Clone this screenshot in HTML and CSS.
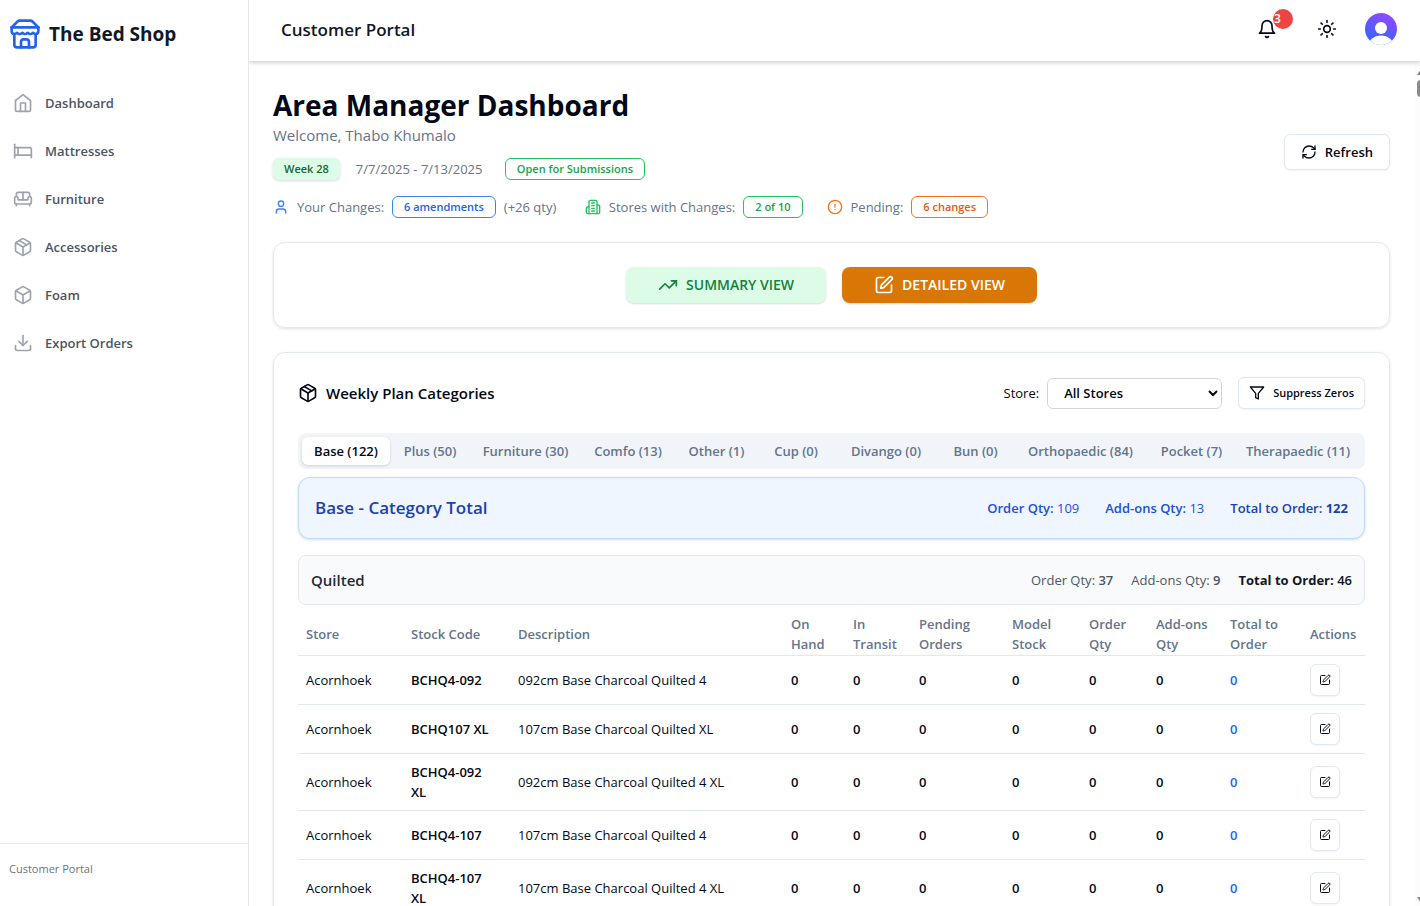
FILE: index.html
```html
<!DOCTYPE html>
<html lang="en">
<head>
<meta charset="utf-8">
<meta name="viewport" content="width=device-width, initial-scale=1">
<title>The Bed Shop - Customer Portal</title>
<link rel="stylesheet" href="styles.css">
</head>
<body>
<svg class="defs" aria-hidden="true">
  <symbol id="i-package" viewBox="0 0 24 24"><path d="m7.5 4.27 9 5.15"/><path d="M21 8a2 2 0 0 0-1-1.73l-7-4a2 2 0 0 0-2 0l-7 4A2 2 0 0 0 3 8v8a2 2 0 0 0 1 1.73l7 4a2 2 0 0 0 2 0l7-4A2 2 0 0 0 21 16Z"/><path d="m3.3 7 8.7 5 8.7-5"/><path d="M12 22V12"/></symbol>
  <symbol id="i-edit" viewBox="0 0 24 24"><path d="M12 3H5a2 2 0 0 0-2 2v14a2 2 0 0 0 2 2h14a2 2 0 0 0 2-2v-7"/><path d="M18.375 2.625a1 1 0 0 1 3 3l-9.013 9.014a2 2 0 0 1-.853.505l-2.873.84a.5.5 0 0 1-.62-.62l.84-2.873a2 2 0 0 1 .506-.852z"/></symbol>
</svg>
<div class="app">
  <aside class="sidebar">
    <div class="brand">
      <svg class="icon brand-icon" viewBox="0 0 24 24" aria-hidden="true"><path d="m2 7 4.410-4.410A2 2 0 0 1 7.830 2h8.340a2 2 0 0 1 1.420.590L22 7"/><path d="M4 12v8a2 2 0 0 0 2 2h12a2 2 0 0 0 2-2v-8"/><path d="M15 22v-4a2 2 0 0 0-2-2h-2a2 2 0 0 0-2 2v4"/><path d="M2 7h20"/><path d="M22 7v3a2 2 0 0 1-2 2 2.700 2.700 0 0 1-1.590-.630.700.700 0 0 0-.820 0A2.700 2.700 0 0 1 16 12a2.700 2.700 0 0 1-1.590-.630.700.700 0 0 0-.820 0A2.700 2.700 0 0 1 12 12a2.700 2.700 0 0 1-1.590-.630.700.700 0 0 0-.820 0A2.700 2.700 0 0 1 8 12a2.700 2.700 0 0 1-1.590-.630.700.700 0 0 0-.820 0A2.700 2.700 0 0 1 4 12a2 2 0 0 1-2-2V7"/></svg>
      <span>The Bed Shop</span>
    </div>
    <nav class="nav">
      <a href="#"><svg class="icon" viewBox="0 0 24 24" aria-hidden="true"><path d="m3 9 9-7 9 7v11a2 2 0 0 1-2 2H5a2 2 0 0 1-2-2z"/><path d="M9 22V12h6v10"/></svg>Dashboard</a>
      <a href="#"><svg class="icon" viewBox="0 0 24 24" aria-hidden="true"><path d="M2 4v16"/><path d="M2 8h18a2 2 0 0 1 2 2v10"/><path d="M2 17h20"/><path d="M6 8v9"/></svg>Mattresses</a>
      <a href="#"><svg class="icon" viewBox="0 0 24 24" aria-hidden="true"><path d="M20 9V6a2 2 0 0 0-2-2H6a2 2 0 0 0-2 2v3"/><path d="M2 16a2 2 0 0 0 2 2h16a2 2 0 0 0 2-2v-5a2 2 0 0 0-4 0v1.500a.5.5 0 0 1-.5.5h-11a.5.5 0 0 1-.5-.5V11a2 2 0 0 0-4 0z"/><path d="M4 18v2"/><path d="M20 18v2"/><path d="M12 4v9"/></svg>Furniture</a>
      <a href="#"><svg class="icon" aria-hidden="true"><use href="#i-package"/></svg>Accessories</a>
      <a href="#"><svg class="icon" viewBox="0 0 24 24" aria-hidden="true"><path d="M21 8a2 2 0 0 0-1-1.730l-7-4a2 2 0 0 0-2 0l-7 4A2 2 0 0 0 3 8v8a2 2 0 0 0 1 1.730l7 4a2 2 0 0 0 2 0l7-4A2 2 0 0 0 21 16Z"/><path d="m3.300 7 8.700 5 8.700-5"/><path d="M12 22V12"/></svg>Foam</a>
      <a href="#"><svg class="icon" viewBox="0 0 24 24" aria-hidden="true"><path d="M3 15v4a2 2 0 0 0 2 2h14a2 2 0 0 0 2-2v-4"/><path d="m7 10 5 5 5-5"/><path d="M12 15V3"/></svg>Export Orders</a>
    </nav>
    <div class="sidebar-foot">Customer Portal</div>
  </aside>

  <div class="page">
    <header class="topbar">
      <div class="topbar-title">Customer Portal</div>
      <div class="topbar-tools">
        <button class="bare bell" aria-label="Notifications">
          <svg class="icon" viewBox="0 0 24 24" aria-hidden="true"><path d="M18 8A6 6 0 0 0 6 8c0 7-3 9-3 9h18s-3-2-3-9"/><path d="M10.300 21a1.940 1.940 0 0 0 3.400 0"/></svg>
          <span class="bell-count">3</span>
        </button>
        <button class="bare" aria-label="Toggle theme">
          <svg class="icon" viewBox="0 0 24 24" aria-hidden="true"><circle cx="12" cy="12" r="4"/><path d="M12 2v2M12 20v2M4.930 4.930l1.410 1.410M17.660 17.660l1.410 1.410M2 12h2M20 12h2M6.340 17.660l-1.410 1.410M19.070 4.930l-1.410 1.410"/></svg>
        </button>
        <button class="bare avatar" aria-label="Account">
          <svg viewBox="0 0 32 32" aria-hidden="true"><defs><linearGradient id="av" x1="0.300" y1="1" x2="0.700" y2="0"><stop offset="0.250" stop-color="#4361ff"/><stop offset="1" stop-color="#9747ff"/></linearGradient><clipPath id="avc"><circle cx="16" cy="16" r="16"/></clipPath></defs><g clip-path="url(#avc)"><rect width="32" height="32" fill="url(#av)"/><circle cx="16" cy="15" r="6" fill="#fff"/><ellipse cx="16" cy="34" rx="13" ry="11.500" fill="#fff"/></g></svg>
        </button>
      </div>
    </header>

    <main class="content">
      <section class="intro">
        <div>
          <h1>Area Manager Dashboard</h1>
          <p class="welcome">Welcome, Thabo Khumalo</p>
          <div class="week">
            <span class="badge badge-week">Week 28</span>
            <span class="dates">7/7/2025 - 7/13/2025</span>
            <span class="badge badge-green">Open for Submissions</span>
          </div>
          <div class="stats">
            <div class="stat">
              <svg class="icon blue" viewBox="0 0 24 24" aria-hidden="true"><path d="M19 21v-2a4 4 0 0 0-4-4H9a4 4 0 0 0-4 4v2"/><circle cx="12" cy="7" r="4"/></svg>
              <span>Your Changes:</span><span class="badge badge-blue">6 amendments</span><span class="qty">(+26 qty)</span>
            </div>
            <div class="stat">
              <svg class="icon green" viewBox="0 0 24 24" aria-hidden="true"><path d="M6 22V4a2 2 0 0 1 2-2h8a2 2 0 0 1 2 2v18Z"/><path d="M6 12H4a2 2 0 0 0-2 2v6a2 2 0 0 0 2 2h2"/><path d="M18 9h2a2 2 0 0 1 2 2v9a2 2 0 0 1-2 2h-2"/><path d="M10 6h4M10 10h4M10 14h4M10 18h4"/></svg>
              <span>Stores with Changes:</span><span class="badge badge-green">2 of 10</span>
            </div>
            <div class="stat">
              <svg class="icon orange" viewBox="0 0 24 24" aria-hidden="true"><circle cx="12" cy="12" r="10"/><path d="M12 8v4M12 16h.01"/></svg>
              <span>Pending:</span><span class="badge badge-orange">6 changes</span>
            </div>
          </div>
        </div>
        <button class="btn refresh"><svg class="icon" viewBox="0 0 24 24" aria-hidden="true"><path d="M3 12a9 9 0 0 1 9-9 9.750 9.750 0 0 1 6.740 2.740L21 8"/><path d="M21 3v5h-5"/><path d="M21 12a9 9 0 0 1-9 9 9.750 9.750 0 0 1-6.740-2.740L3 16"/><path d="M8 16H3v5"/></svg>Refresh</button>
      </section>

      <section class="card views">
        <button class="view view-summary"><svg class="icon" viewBox="0 0 24 24" aria-hidden="true"><path d="m22 7-8.500 8.500-5-5L2 17"/><path d="M16 7h6v6"/></svg>SUMMARY VIEW</button>
        <button class="view view-detail"><svg class="icon" aria-hidden="true"><use href="#i-edit"/></svg>DETAILED VIEW</button>
      </section>

      <section class="card plan">
        <div class="plan-head">
          <h2><svg class="icon" aria-hidden="true"><use href="#i-package"/></svg>Weekly Plan Categories</h2>
          <div class="filters">
            <label for="store">Store:</label>
            <select id="store"><option>All Stores</option></select>
            <button class="btn suppress"><svg class="icon" viewBox="0 0 24 24" aria-hidden="true"><path d="M22 3H2l8 9.460V19l4 2v-8.540L22 3z"/></svg>Suppress Zeros</button>
          </div>
        </div>

        <div class="tabs" role="tablist">
          <button role="tab" aria-selected="true">Base (122)</button>
          <button role="tab">Plus (50)</button>
          <button role="tab">Furniture (30)</button>
          <button role="tab">Comfo (13)</button>
          <button role="tab">Other (1)</button>
          <button role="tab">Cup (0)</button>
          <button role="tab">Divango (0)</button>
          <button role="tab">Bun (0)</button>
          <button role="tab">Orthopaedic (84)</button>
          <button role="tab">Pocket (7)</button>
          <button role="tab">Therapaedic (11)</button>
        </div>

        <div class="total">
          <h3>Base - Category Total</h3>
          <div class="total-sums"><span><b>Order Qty:</b> 109</span><span><b>Add-ons Qty:</b> 13</span><span class="strong"><b>Total to Order:</b> <strong>122</strong></span></div>
        </div>

        <div class="group">
          <h4>Quilted</h4>
          <div class="group-sums"><span>Order Qty: <b>37</b></span><span>Add-ons Qty: <b>9</b></span><span class="strong"><strong>Total to Order:</strong> <b>46</b></span></div>
        </div>

        <table>
          <colgroup><col class="c-store"><col class="c-code"><col><col class="c-hand"><col class="c-transit"><col class="c-pending"><col class="c-model"><col class="c-order"><col class="c-addons"><col class="c-total"><col class="c-actions"></colgroup>
          <thead><tr><th>Store</th><th>Stock Code</th><th>Description</th><th>On<br>Hand</th><th>In<br>Transit</th><th>Pending<br>Orders</th><th>Model<br>Stock</th><th>Order<br>Qty</th><th>Add-ons<br>Qty</th><th>Total to<br>Order</th><th>Actions</th></tr></thead>
          <tbody>
            <tr><td>Acornhoek</td><td class="b code">BCHQ4-092</td><td>092cm Base Charcoal Quilted 4</td><td class="b">0</td><td class="b">0</td><td class="b">0</td><td class="b">0</td><td class="b">0</td><td class="b">0</td><td class="b sum">0</td><td><button class="btn row-edit" aria-label="Edit"><svg class="icon" aria-hidden="true"><use href="#i-edit"/></svg></button></td></tr>
            <tr><td>Acornhoek</td><td class="b code">BCHQ107 XL</td><td>107cm Base Charcoal Quilted XL</td><td class="b">0</td><td class="b">0</td><td class="b">0</td><td class="b">0</td><td class="b">0</td><td class="b">0</td><td class="b sum">0</td><td><button class="btn row-edit" aria-label="Edit"><svg class="icon" aria-hidden="true"><use href="#i-edit"/></svg></button></td></tr>
            <tr><td>Acornhoek</td><td class="b code">BCHQ4-092 XL</td><td>092cm Base Charcoal Quilted 4 XL</td><td class="b">0</td><td class="b">0</td><td class="b">0</td><td class="b">0</td><td class="b">0</td><td class="b">0</td><td class="b sum">0</td><td><button class="btn row-edit" aria-label="Edit"><svg class="icon" aria-hidden="true"><use href="#i-edit"/></svg></button></td></tr>
            <tr><td>Acornhoek</td><td class="b code">BCHQ4-107</td><td>107cm Base Charcoal Quilted 4</td><td class="b">0</td><td class="b">0</td><td class="b">0</td><td class="b">0</td><td class="b">0</td><td class="b">0</td><td class="b sum">0</td><td><button class="btn row-edit" aria-label="Edit"><svg class="icon" aria-hidden="true"><use href="#i-edit"/></svg></button></td></tr>
            <tr><td>Acornhoek</td><td class="b code">BCHQ4-107 XL</td><td>107cm Base Charcoal Quilted 4 XL</td><td class="b">0</td><td class="b">0</td><td class="b">0</td><td class="b">0</td><td class="b">0</td><td class="b">0</td><td class="b sum">0</td><td><button class="btn row-edit" aria-label="Edit"><svg class="icon" aria-hidden="true"><use href="#i-edit"/></svg></button></td></tr>
          </tbody>
        </table>
      </section>
    </main>
    <div class="scroll" aria-hidden="true"><i class="scroll-up"></i><i class="scroll-thumb"></i><i class="scroll-down"></i></div>
  </div>
</div>
</body>
</html>
```
FILE: styles.css
```css
* { box-sizing: border-box; }
body {
  margin: 0;
  font-family: "Open Sans", "Noto Sans", sans-serif;
  font-size: 13px;
  line-height: 20px;
  color: #020817;
  background: #fff;
}
h1, h2, h3, h4, p { margin: 0; }
button, select { font: inherit; color: inherit; }
button { cursor: pointer; }
b { font-weight: 600; }
strong { font-weight: 700; }
.defs { position: absolute; width: 0; height: 0; }
.icon {
  flex: none;
  width: 16px;
  height: 16px;
  fill: none;
  stroke: currentColor;
  stroke-width: 2;
  stroke-linecap: round;
  stroke-linejoin: round;
}

.app { display: flex; height: 100vh; overflow: hidden; }

.sidebar {
  position: relative;
  z-index: 2;
  display: flex;
  flex-direction: column;
  flex: none;
  width: 249px;
  border-right: 1px solid #e5e7eb;
  background: #fff;
}
.brand {
  display: flex;
  align-items: center;
  gap: 8px;
  height: 67px;
  padding: 0 9px;
  font-size: 19px;
  font-weight: 700;
  color: #111827;
}
.brand-icon { width: 32px; height: 32px; color: #2563eb; }
.nav { display: flex; flex-direction: column; gap: 8px; flex: 1; padding-top: 16px; }
.nav a {
  display: flex;
  align-items: center;
  gap: 12px;
  height: 40px;
  padding: 0 13px;
  font-weight: 600;
  color: #4b5563;
  text-decoration: none;
}
.nav .icon { width: 20px; height: 20px; color: #9ca3af; }
.sidebar-foot {
  height: 63px;
  padding: 15px 9px;
  border-top: 1px solid #e5e7eb;
  font-size: 11px;
  color: #6b7280;
}

.page { position: relative; display: flex; flex-direction: column; flex: 1; min-width: 0; }
.topbar {
  position: relative;
  z-index: 1;
  display: flex;
  align-items: center;
  justify-content: space-between;
  flex: none;
  height: 61px;
  padding: 0 23px 4px 32px;
  background: #fff;
  box-shadow: 0 1px 5px rgba(0, 0, 0, 0.25);
}
.topbar-title { padding-top: 2px; font-size: 17px; line-height: 24px; font-weight: 600; color: #111827; }
.topbar-tools { display: flex; align-items: center; gap: 40px; }
.bare { display: flex; padding: 0; border: 0; background: none; }
.bare .icon { width: 20px; height: 20px; }
.bell { position: relative; }
.bell-count {
  position: absolute;
  top: -10px;
  left: 16px;
  width: 20px;
  height: 20px;
  padding-left: 1px;
  border-radius: 10px;
  background: #ef4444;
  color: #fff;
  font-size: 12px;
  font-weight: 600;
  text-align: left;
}
.avatar { margin-left: -12px; }
.avatar svg { width: 32px; height: 32px; }

.content { flex: 1; min-height: 0; overflow: hidden; padding: 24px 30px 0 24px; }
.intro { display: flex; align-items: center; justify-content: space-between; }
h1 { font-size: 28px; line-height: 40px; font-weight: 700; }
.welcome { font-size: 15px; line-height: 20px; color: #64748b; }
.week { display: flex; align-items: center; gap: 16px; margin-top: 13px; color: #64748b; }
.dates { min-width: 133px; }
.stats { display: flex; align-items: center; gap: 24px; margin-top: 16px; color: #64748b; }
.stat { display: flex; align-items: center; gap: 8px; }
.qty { min-width: 57px; }
.badge {
  padding: 0 11px;
  border: 1px solid;
  border-radius: 6px;
  font-size: 11px;
  font-weight: 600;
}
.badge-week { padding: 0 10px; border-color: #dcfce7; background: #dcfce7; color: #166534; box-shadow: 0 1px 3px rgba(0, 0, 0, 0.15); }
.badge-green { border-color: #22c55e; color: #16a34a; }
.badge-blue { border-color: #3b82f6; color: #2563eb; }
.badge-orange { border-color: #f97316; color: #ea580c; }
.blue { color: #3b82f6; }
.green { color: #22c55e; }
.orange { color: #f97316; }

.btn {
  display: inline-flex;
  align-items: center;
  justify-content: center;
  border: 1px solid #e2e8f0;
  border-radius: 6px;
  background: #fff;
  font-weight: 600;
  box-shadow: 0 1px 2px rgba(0, 0, 0, 0.05);
}
.refresh { gap: 8px; height: 36px; padding: 0 16px; }

.card {
  margin-top: 24px;
  border: 1px solid #e2e8f0;
  border-radius: 12px;
  box-shadow: 0 1px 3px rgba(0, 0, 0, 0.12);
}
.views { display: flex; justify-content: center; gap: 16px; padding: 24px; }
.view {
  display: flex;
  align-items: center;
  gap: 8px;
  height: 36px;
  padding: 0 32px;
  border: 0;
  border-radius: 8px;
  font-size: 14px;
  font-weight: 600;
  box-shadow: 0 1px 2px rgba(0, 0, 0, 0.15);
}
.view .icon { width: 20px; height: 20px; }
.view-summary { background: #dcfce7; color: #15803d; }
.view-detail { background: #d97706; color: #fff; }

.plan { padding: 24px; }
.plan-head { display: flex; align-items: center; justify-content: space-between; }
h2 { display: flex; align-items: center; gap: 8px; font-size: 15px; font-weight: 600; }
h2 .icon { width: 20px; height: 20px; }
.filters { display: flex; align-items: center; }
select {
  width: 175px;
  height: 31px;
  margin: 0 16px 0 8px;
  padding: 0 12px;
  border: 1px solid #d1d5db;
  border-radius: 6px;
  background: #fff;
  font-weight: 600;
}
.suppress { gap: 8px; height: 32px; padding: 0 10px; font-size: 11px; }

.tabs {
  display: grid;
  grid-template-columns: 88fr 80fr 111fr 94fr 83fr 76fr 104fr 75fr 135fr 87fr 126fr;
  margin-top: 24px;
  padding: 4px;
  border-radius: 8px;
  background: #f1f5f9;
}
.tabs button {
  min-width: 0;
  height: 28px;
  padding: 0;
  border: 0;
  border-radius: 6px;
  background: none;
  color: #64748b;
  font-weight: 600;
  white-space: nowrap;
}
.tabs button[aria-selected="true"] { background: #fff; color: #020817; box-shadow: 0 1px 3px rgba(0, 0, 0, 0.15); }

.total {
  display: flex;
  align-items: center;
  justify-content: space-between;
  height: 62px;
  margin-top: 8px;
  padding: 0 16px;
  border: 1px solid #bfdbfe;
  border-radius: 12px;
  background: #eff6ff;
  color: #1d4ed8;
  box-shadow: 0 1px 3px rgba(0, 0, 0, 0.15);
}
h3 { font-size: 17px; line-height: 28px; font-weight: 600; color: #1e40af; }
.total-sums { display: flex; gap: 26px; }
.total .strong { color: #1e40af; }
.group {
  display: flex;
  align-items: center;
  justify-content: space-between;
  height: 50px;
  margin-top: 16px;
  padding: 0 12px;
  border: 1px solid #e2e8f0;
  border-radius: 8px;
  background: #f9fafb;
  color: #4b5563;
}
h4 { font-size: 15px; font-weight: 600; color: #1f2937; }
.group-sums { display: flex; gap: 18px; }
.group .strong { color: #111827; }

table { width: 100%; margin-top: 8px; table-layout: fixed; border-collapse: collapse; }
th, td { padding: 8px; border-bottom: 1px solid #e2e8f0; text-align: left; vertical-align: middle; }
th { padding: 1px 8px; font-weight: 600; color: #64748b; }
.b { font-weight: 600; }
.code { padding-right: 16px; }
.sum { color: #2563eb; }
.c-store { width: 105px; }
.c-code { width: 107px; }
.c-hand { width: 62px; }
.c-transit { width: 66px; }
.c-pending { width: 93px; }
.c-model { width: 77px; }
.c-order { width: 67px; }
.c-addons { width: 74px; }
.c-total { width: 80px; }
.c-actions { width: 63px; }
.row-edit { display: flex; width: 30px; height: 32px; padding: 0; }
.row-edit .icon { width: 12px; height: 12px; }

/* Edge scrollbar, partly past the window's right side */
.scroll { position: absolute; top: 61px; right: 0; bottom: 0; width: 5px; overflow: hidden; background: #fcfcfc; }
.scroll i { position: absolute; left: 2px; }
.scroll-up { top: 8px; border: 4px solid transparent; border-top: 0; border-bottom: 6px solid #8a8a8a; }
.scroll-thumb { top: 19px; width: 8px; height: 17px; border-radius: 4px; background: #8a8a8a; }
.scroll-down { bottom: 3px; border: 4px solid transparent; border-bottom: 0; border-top: 6px solid #8a8a8a; }
```
